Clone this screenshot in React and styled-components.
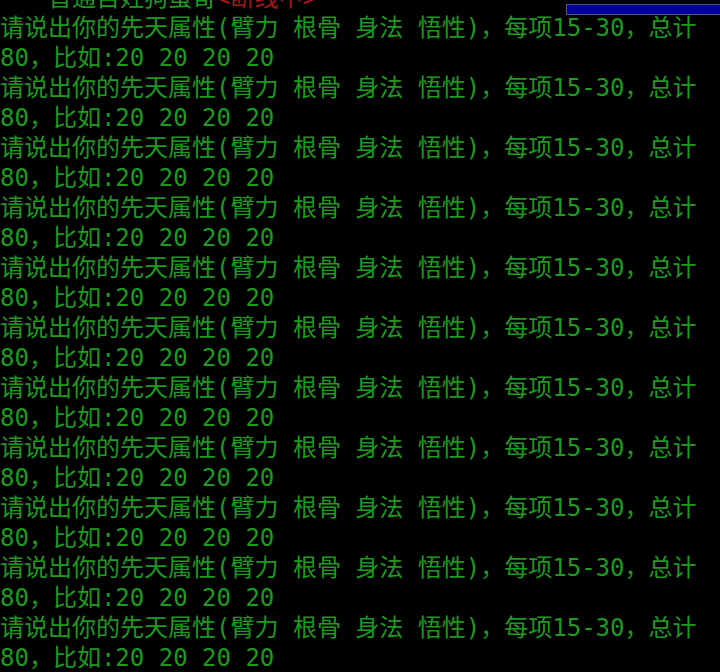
import React from 'react';
import styled, { createGlobalStyle } from 'styled-components';

const GlobalStyle = createGlobalStyle`
  html, body {
    margin: 0;
    padding: 0;
    background: #000;
    overflow: hidden;
  }
`;

const Screen = styled.div`
  position: relative;
  width: 720px;
  height: 672px;
  background: #000;
  overflow: hidden;
`;

const Console = styled.div`
  margin-top: -17px;
  width: 720px;
  font-family: 'DejaVu Sans Mono', 'Noto Sans CJK SC', monospace;
  font-size: 24px;
  line-height: 30px;
  color: #1e9a1e;
  white-space: pre-wrap;
  word-break: normal;
`;

const Line = styled.div`
  color: ${(p) => p.$color || 'inherit'};
`;

const Alert = styled.span`
  color: #a8161a;
`;

// 右上角的状态条
const StatusBar = styled.div`
  position: absolute;
  top: 4px;
  left: 566px;
  width: 160px;
  height: 9px;
  background: #00009a;
  border: 1px solid #55557a;
`;

const PROMPT = '请说出你的先天属性(臂力 根骨 身法 悟性)，每项15-30，总计80，比如:20 20 20 20';

const App = () => {
  const prompts = Array.from({ length: 11 });
  return (
    <Screen>
      <GlobalStyle />
      <Console>
        <Line>
          {'　　普通百姓狗蛋哥'}
          <Alert>{'<断线中>'}</Alert>
        </Line>
        {prompts.map((_, i) => (
          <Line key={i}>{PROMPT}</Line>
        ))}
      </Console>
      <StatusBar />
    </Screen>
  );
};

export default App;
